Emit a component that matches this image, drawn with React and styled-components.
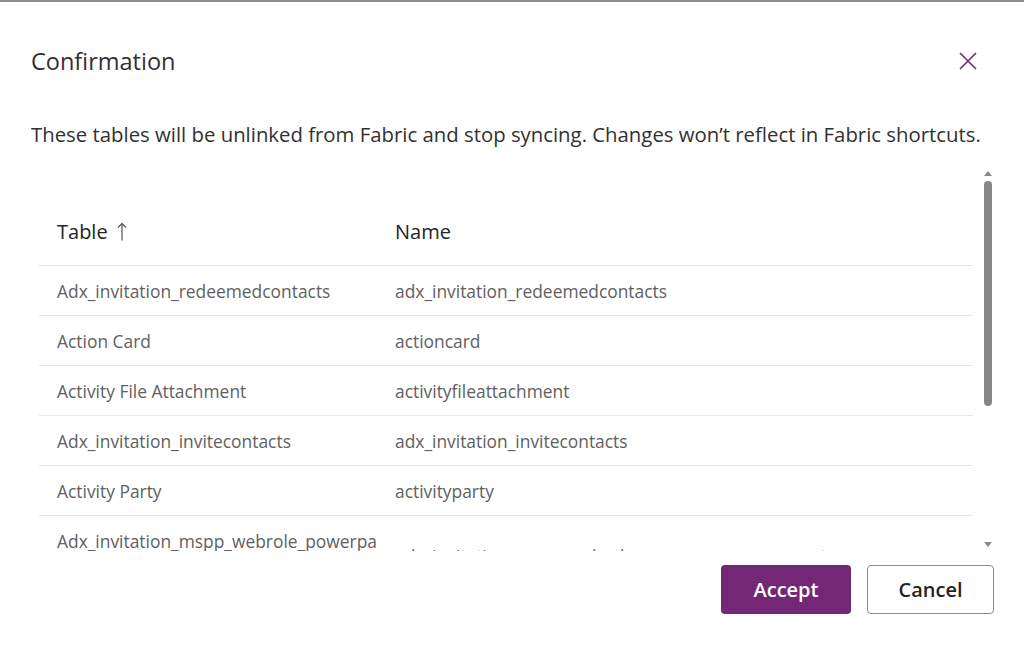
import React from "react";
import styled, { createGlobalStyle } from "styled-components";

const GlobalStyle = createGlobalStyle`
  html, body {
    margin: 0;
    padding: 0;
    background: #ffffff;
  }
  body {
    font-family: "Open Sans", "Noto Sans", sans-serif;
  }
`;

const rows = [
  ["Adx_invitation_redeemedcontacts", "adx_invitation_redeemedcontacts"],
  ["Action Card", "actioncard"],
  ["Activity File Attachment", "activityfileattachment"],
  ["Adx_invitation_invitecontacts", "adx_invitation_invitecontacts"],
  ["Activity Party", "activityparty"],
  [
    "Adx_invitation_mspp_webrole_powerpagecomponent",
    "adx_invitation_mspp_webrole_powerpagecomponent",
  ],
];

export default function App() {
  return (
    <>
      <GlobalStyle />
      <Dialog>
        <Header>
          <Title>Confirmation</Title>
          <CloseButton aria-label="Close">
            <svg width="18" height="18" viewBox="0 0 18 18">
              <path
                d="M1 1 L17 17 M17 1 L1 17"
                stroke="#742774"
                strokeWidth="1.6"
                fill="none"
              />
            </svg>
          </CloseButton>
        </Header>
        <Message>
          These tables will be unlinked from Fabric and stop syncing. Changes
          won’t reflect in Fabric shortcuts.
        </Message>
        <ScrollBox>
          <Table>
            <HeadRow>
              <HeadCell>
                Table
                <svg width="10" height="19" viewBox="0 0 10 19">
                  <path
                    d="M5 1.5 L5 18.5 M1 5.5 L5 1.5 L9 5.5"
                    stroke="#616161"
                    strokeWidth="1.3"
                    fill="none"
                  />
                </svg>
              </HeadCell>
              <HeadCell>Name</HeadCell>
            </HeadRow>
            {rows.map(([table, name], i) => (
              <Row key={name}>
                <Cell>{table}</Cell>
                <Cell $sink={i === rows.length - 1}>{name}</Cell>
              </Row>
            ))}
          </Table>
          <Scrollbar>
            <ArrowUp />
            <Thumb />
            <Spacer />
            <ArrowDown />
          </Scrollbar>
        </ScrollBox>
        <Footer>
          <PrimaryButton>Accept</PrimaryButton>
          <SecondaryButton>Cancel</SecondaryButton>
        </Footer>
      </Dialog>
    </>
  );
}

const Dialog = styled.div`
  width: 1024px;
  height: 645px;
  box-sizing: border-box;
  border-top: 2px solid #8c8c8c;
  background: #fff;
  display: flex;
  flex-direction: column;
  overflow: hidden;
`;

const Header = styled.div`
  display: flex;
  align-items: center;
  justify-content: space-between;
  padding: 43px 44px 0 31px;
`;

const Title = styled.h2`
  margin: 0;
  font-size: 23.5px;
  line-height: 32px;
  font-weight: 400;
  color: #323130;
`;

const CloseButton = styled.button`
  width: 24px;
  height: 24px;
  padding: 0;
  border: none;
  background: none;
  display: flex;
  align-items: center;
  justify-content: center;
`;

const Message = styled.p`
  margin: 43px 0 0 31px;
  font-size: 20.35px;
  line-height: 28px;
  color: #323130;
  white-space: nowrap;
`;

const ScrollBox = styled.div`
  margin-top: 21px;
  height: 382px;
  display: flex;
  gap: 11px;
  padding: 0 32px 0 39px;
  overflow: hidden;
`;

const Table = styled.div`
  flex: 1;
  padding-top: 28px;
  overflow: hidden;
`;

const HeadRow = styled.div`
  display: grid;
  grid-template-columns: 338px 1fr;
  height: 68px;
  border-bottom: 1px solid #e1e1e1;
`;

const HeadCell = styled.div`
  display: flex;
  align-items: center;
  gap: 9px;
  padding-left: 18px;
  font-size: 20px;
  color: #242424;
`;

const Row = styled.div`
  display: grid;
  grid-template-columns: 338px 1fr;
  height: 49px;
  border-bottom: 1px solid #e6e6e6;
`;

const Cell = styled.div`
  display: flex;
  align-items: ${(p) => (p.$sink ? "flex-start" : "center")};
  padding-left: 18px;
  padding-top: ${(p) => (p.$sink ? "28px" : "0")};
  font-size: 17.4px;
  line-height: 24px;
  color: #616161;
  white-space: nowrap;
  overflow: hidden;
`;

const Scrollbar = styled.div`
  width: 8px;
  display: flex;
  flex-direction: column;
  align-items: center;
`;

const ArrowUp = styled.div`
  margin-top: 2px;
  width: 0;
  height: 0;
  border-left: 4px solid transparent;
  border-right: 4px solid transparent;
  border-bottom: 5px solid #8a8a8a;
`;

const Thumb = styled.div`
  margin-top: 5px;
  width: 8px;
  height: 225px;
  border-radius: 4px;
  background: #878787;
`;

const Spacer = styled.div`
  flex: 1;
`;

const ArrowDown = styled.div`
  margin-bottom: 4px;
  width: 0;
  height: 0;
  border-left: 4px solid transparent;
  border-right: 4px solid transparent;
  border-top: 5px solid #8a8a8a;
`;

const Footer = styled.div`
  margin-top: 14px;
  display: flex;
  justify-content: flex-end;
  gap: 16px;
  padding-right: 30px;
`;

const BaseButton = styled.button`
  height: 49px;
  border-radius: 4px;
  font-family: inherit;
  font-size: 20px;
  font-weight: 600;
  cursor: pointer;
`;

const PrimaryButton = styled(BaseButton)`
  width: 130px;
  border: none;
  background: #742774;
  color: #ffffff;
`;

const SecondaryButton = styled(BaseButton)`
  width: 127px;
  border: 1px solid #8a8a8a;
  background: #ffffff;
  color: #242424;
`;
